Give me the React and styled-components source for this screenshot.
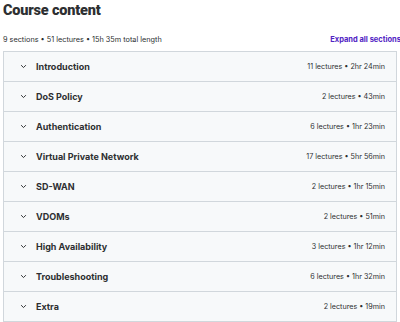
import React from "react";
import styled, { createGlobalStyle } from "styled-components";

const Global = createGlobalStyle`
  html, body { margin: 0; padding: 0; background: #fff; }
  body { font-family: Inter, "Noto Sans", sans-serif; color: #2d2f31; }
`;

const Page = styled.div`
  width: 400px;
  padding: 0 3px 0 3px;
  box-sizing: border-box;
`;

const Title = styled.h2`
  margin: 0;
  padding-top: 1px;
  font-family: Roboto, "Noto Sans", sans-serif;
  font-size: 14.5px;
  line-height: 20px;
  font-weight: 900;
  letter-spacing: -0.2px;
`;

const MetaBar = styled.div`
  display: flex;
  justify-content: space-between;
  align-items: center;
  margin-top: 13px;
  height: 10px;
  margin-right: -4px;
`;

const Meta = styled.span`
  font-size: 7.3px;
  color: #2d2f31;
`;

const Expand = styled.span`
  font-size: 7.5px;
  font-weight: 700;
  color: #5022c3;
  white-space: nowrap;
`;

const List = styled.div`
  margin-top: 7px;
  border: 1px solid #d1d7dc;
  border-bottom: none;
`;

const Row = styled.div`
  display: flex;
  align-items: center;
  height: 29px;
  background: #f7f9fa;
  border-bottom: 1px solid #d1d7dc;
  padding: 0 11px 0 16px;
`;

const Chevron = styled.svg`
  width: 7px;
  height: 7px;
  flex: none;
  margin-right: 9px;
`;

const SectionName = styled.span`
  flex: 1;
  font-size: 9px;
  font-weight: 700;
  color: #2d2f31;
`;

const Info = styled.span`
  font-size: 7.2px;
  color: #2d2f31;
`;

const sections = [
  ["Introduction", "11 lectures • 2hr 24min"],
  ["DoS Policy", "2 lectures • 43min"],
  ["Authentication", "6 lectures • 1hr 23min"],
  ["Virtual Private Network", "17 lectures • 5hr 56min"],
  ["SD-WAN", "2 lectures • 1hr 15min"],
  ["VDOMs", "2 lectures • 51min"],
  ["High Availability", "3 lectures • 1hr 12min"],
  ["Troubleshooting", "6 lectures • 1hr 32min"],
  ["Extra", "2 lectures • 19min"],
];

export default function App() {
  return (
    <Page>
      <Global />
      <Title>Course content</Title>
      <MetaBar>
        <Meta>9 sections • 51 lectures • 15h 35m total length</Meta>
        <Expand>Expand all sections</Expand>
      </MetaBar>
      <List>
        {sections.map(([name, info]) => (
          <Row key={name}>
            <Chevron viewBox="0 0 10 10">
              <path d="M2 3.5 L5 6.5 L8 3.5" fill="none" stroke="#2d2f31" strokeWidth="1.4" strokeLinecap="round" strokeLinejoin="round" />
            </Chevron>
            <SectionName>{name}</SectionName>
            <Info>{info}</Info>
          </Row>
        ))}
      </List>
    </Page>
  );
}
